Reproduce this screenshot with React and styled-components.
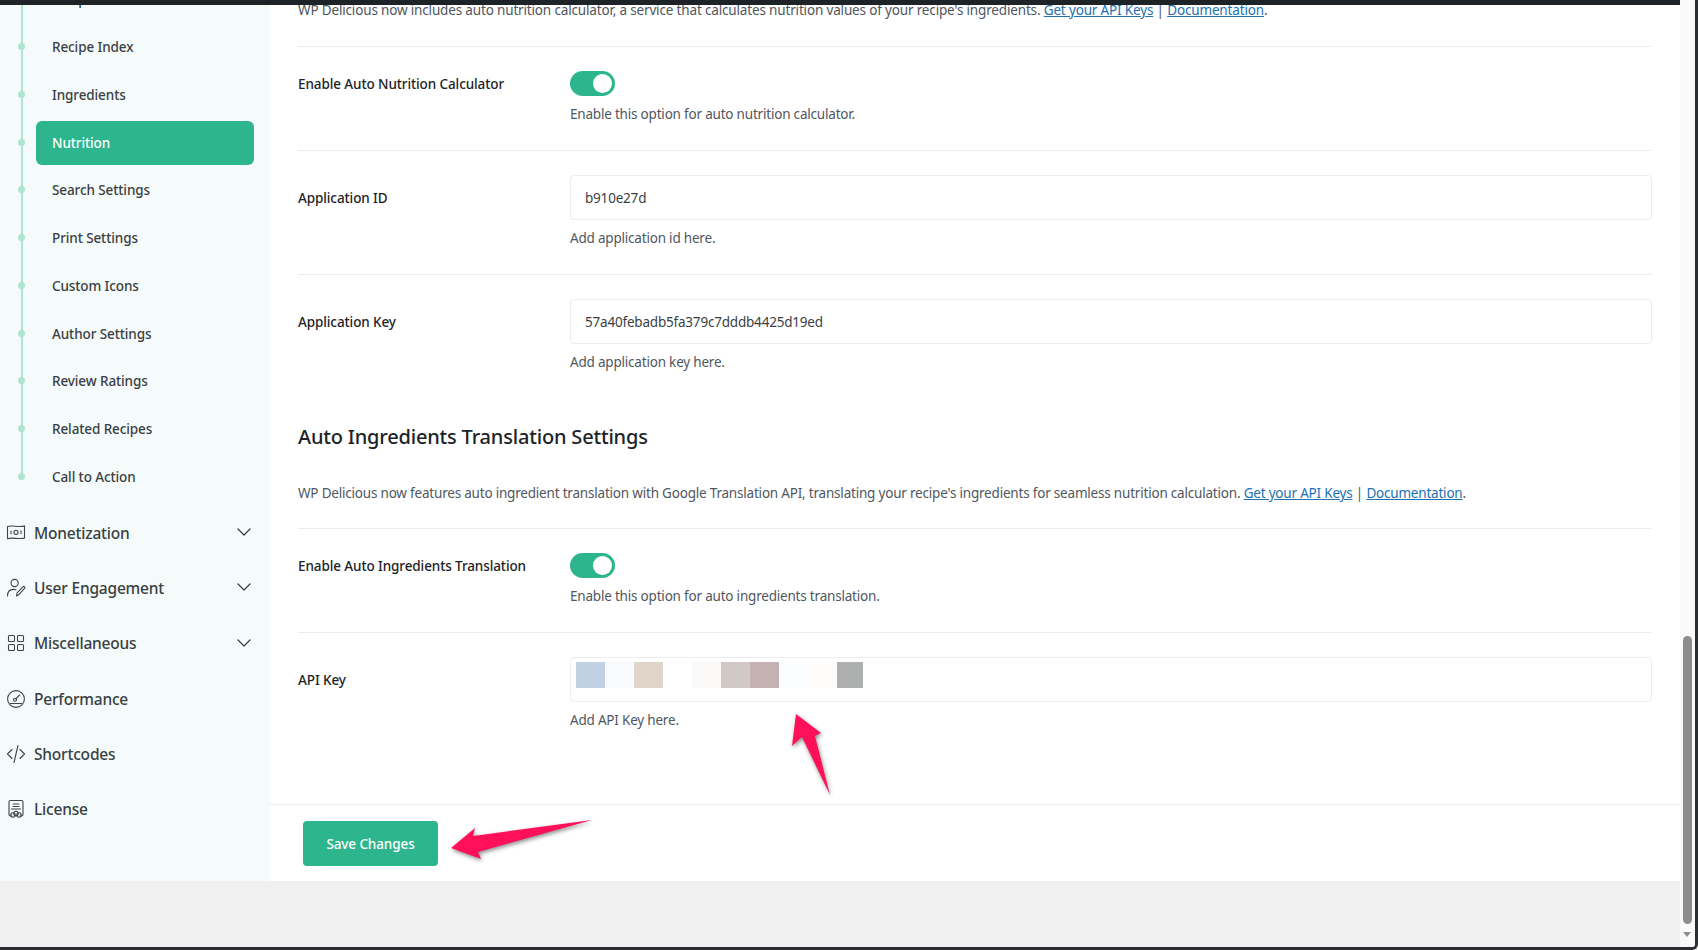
import React from 'react';
import styled, { createGlobalStyle } from 'styled-components';
import { ChevronDown } from 'lucide-react';

const GlobalStyle = createGlobalStyle`
  html, body {
    margin: 0;
    padding: 0;
    height: 100%;
    overflow: hidden;
    background: #f0f0f0;
  }
  body {
    font-family: 'Noto Sans', 'Open Sans', sans-serif;
    font-size: 13.5px;
    letter-spacing: -0.2px;
    line-height: 20px;
    color: #50575e;
  }
  * {
    box-sizing: border-box;
  }
`;

const Frame = styled.div`
  position: relative;
  display: flex;
  width: 1698px;
  height: 950px;
  overflow: hidden;
  background: #f0f0f0;
  border-right: 3px solid #2b2d30;
  border-bottom: 3px solid #2b2d30;
  border-bottom-right-radius: 6px;
`;

const AdminBar = styled.div`
  position: absolute;
  top: 0;
  left: 0;
  width: 1680px;
  height: 5px;
  background: #1d2327;
  z-index: 5;
`;

const Viewport = styled.div`
  flex: 1;
  min-width: 0;
  overflow: hidden;
`;

const Layout = styled.div`
  position: relative;
  display: flex;
  margin-top: -24px;
`;

const Sidebar = styled.aside`
  flex: 0 0 270px;
  padding-top: 1.6px;
  background: #f5fbfa;
`;

const SubList = styled.ul`
  position: relative;
  display: flex;
  flex-direction: column;
  gap: 3.72px;
  margin: 0 0 6.2px;
  padding: 0;
  list-style: none;

  &::before {
    content: '';
    position: absolute;
    left: 21px;
    top: 0;
    bottom: 22px;
    width: 1.5px;
    background: #afe3d2;
  }
`;

const SubItem = styled.li`
  position: relative;
  display: flex;
  align-items: center;
  height: 44px;
  width: 218px;
  margin-left: 36px;
  padding-left: 16px;
  border-radius: 6px;
  font-weight: 500;
  letter-spacing: -0.1px;
  color: ${(p) => (p.$active ? '#ffffff' : '#3a3f44')};
  background: ${(p) => (p.$active ? '#2db58d' : 'transparent')};

  &::before {
    content: '';
    position: absolute;
    left: -18px;
    top: 18px;
    width: 7px;
    height: 7px;
    border-radius: 50%;
    background: #afe3d2;
  }
`;

const NavRow = styled.div`
  display: flex;
  align-items: center;
  height: 55.3px;
  padding: 0 14px 0 6px;
  font-size: 15.5px;
  letter-spacing: -0.2px;
  font-weight: 500;
  color: #3a3f44;
`;

const NavIcon = styled.svg`
  flex: 0 0 20px;
  width: 20px;
  height: 20px;
  margin-right: 8px;
  fill: none;
  stroke: #3f4449;
  stroke-width: 1.1;
  stroke-linecap: round;
  stroke-linejoin: round;
`;

const NavLabel = styled.span`
  flex: 1;
`;

const Chevron = styled(ChevronDown)`
  width: 24px;
  height: 24px;
  margin-top: -1px;
  color: #3a3f44;
`;

const Main = styled.main`
  flex: 1;
  min-width: 0;
  background: #ffffff;
`;

const Content = styled.div`
  padding: 24px 28px 48px;
`;

const Intro = styled.p`
  margin: 0 0 26px;
  letter-spacing: -0.16px;
`;

const Link = styled.a`
  color: #2271b1;
  text-decoration: underline;
`;

const Row = styled.div`
  display: grid;
  grid-template-columns: 272px 1fr;
  padding: 24px 0 26px;
  border-top: 1px solid #ececec;
`;

const Label = styled.div`
  display: flex;
  align-items: center;
  height: ${(p) => p.$height}px;
  font-weight: 500;
  letter-spacing: -0.1px;
  color: #1d2327;
`;

const Toggle = styled.div`
  position: relative;
  width: 45px;
  height: 25px;
  border-radius: 13px;
  background: #2db58d;

  &::after {
    content: '';
    position: absolute;
    top: 3px;
    right: 3px;
    width: 19px;
    height: 19px;
    border-radius: 50%;
    background: #ffffff;
  }
`;

const InputWrap = styled.div`
  position: relative;
`;

const Input = styled.input`
  display: block;
  width: 100%;
  height: 45px;
  padding: 0 14px;
  border: 1px solid #ececec;
  border-radius: 4px;
  background: #ffffff;
  font: inherit;
  letter-spacing: inherit;
  color: #3a3f44;
  outline: none;
`;

const Blur = styled.div`
  position: absolute;
  top: 5px;
  left: 6px;
  display: flex;
  height: 26px;
`;

const Swatch = styled.span`
  width: ${(p) => p.$w || 29}px;
  background: ${(p) => p.$c};
`;

const Hint = styled.p`
  margin: 8px 0 0;
`;

const Heading = styled.h2`
  margin: 0;
  padding: 26px 0 0;
  height: 66px;
  font-size: 20px;
  line-height: 26px;
  letter-spacing: -0.18px;
  font-weight: 500;
  color: #1d2327;
`;

const SectionIntro = styled.p`
  margin: 19px 0 25px;
`;

const Footer = styled.div`
  padding: 16px 33px 15px;
  border-top: 1px solid #ececec;
`;

const SaveButton = styled.button`
  display: block;
  width: 135px;
  height: 45px;
  border: 0;
  border-radius: 4px;
  background: #2db58d;
  color: #ffffff;
  font: inherit;
  letter-spacing: -0.1px;
  font-weight: 500;
`;

const Arrow = styled.svg`
  position: absolute;
  left: 0;
  top: 0;
  width: 1680px;
  height: 950px;
  pointer-events: none;
  z-index: 4;
  filter: drop-shadow(1px 2px 2px rgba(0, 0, 0, 0.45));
`;

const Scrollbar = styled.div`
  position: relative;
  flex: 0 0 15px;
  background: #fafafa;
`;

const Thumb = styled.div`
  position: absolute;
  left: 3px;
  top: 636px;
  width: 9px;
  height: 288px;
  border-radius: 5px;
  background: #8d8d8d;
`;

const ScrollArrow = styled.div`
  position: absolute;
  left: 3px;
  top: 932px;
  border-left: 4.5px solid transparent;
  border-right: 4.5px solid transparent;
  border-top: 5px solid #8d8d8d;
`;

const subItems = [
  'Recipe Details',
  'Recipe Index',
  'Ingredients',
  'Nutrition',
  'Search Settings',
  'Print Settings',
  'Custom Icons',
  'Author Settings',
  'Review Ratings',
  'Related Recipes',
  'Call to Action',
];

const icons = {
  money: (
    <>
      <path d="M1.5 3.5c5-1.6 11 1.2 17-.6v12.2c-6 1.6-12-1.2-17 .6z" />
      <circle cx="10" cy="9.3" r="2.1" />
      <path d="M5 8v2.8M15 7.8v2.8" />
    </>
  ),
  user: (
    <>
      <circle cx="8.6" cy="5" r="3.6" />
      <path d="M1.5 18c0-4.4 2.6-6.6 6-6.6 1 0 1.8.1 2.5.4" />
      <path d="M10.5 18l.6-3.2 6-6.2c.8-.7 2.4.7 1.6 1.6l-6 6.6z" />
    </>
  ),
  grid: (
    <>
      <rect x="2.5" y="2.5" width="6" height="6" rx="1" />
      <rect x="11.5" y="2.5" width="6" height="6" rx="1" />
      <rect x="2.5" y="11.5" width="6" height="6" rx="1" />
      <rect x="11.5" y="11.5" width="6" height="6" rx="1" />
    </>
  ),
  gauge: (
    <>
      <circle cx="10" cy="10" r="8.4" />
      <circle cx="9" cy="10.8" r="1.5" />
      <path d="M10 9.8l3.6-3.8M4.5 14.5h11" />
    </>
  ),
  code: <path d="M6 5.5L1.5 10 6 14.5M14 5.5l4.5 4.5-4.5 4.5M12 1.5L8 18.5" />,
  license: (
    <>
      <path d="M6 17H4.5A1.5 1.5 0 0 1 3 15.5V3A1.5 1.5 0 0 1 4.5 1.5h11A1.5 1.5 0 0 1 17 3v12.5a1.5 1.5 0 0 1-1.5 1.5H14" />
      <path d="M7 5h6M7 7.5h6M5.5 10h9" />
      <circle cx="7" cy="16" r="2.2" />
      <circle cx="13" cy="16" r="2.2" />
      <circle cx="10" cy="14.5" r="2.2" />
    </>
  ),
};

const navItems = [
  { label: 'Monetization', icon: 'money', more: true },
  { label: 'User Engagement', icon: 'user', more: true },
  { label: 'Miscellaneous', icon: 'grid', more: true },
  { label: 'Performance', icon: 'gauge' },
  { label: 'Shortcodes', icon: 'code' },
  { label: 'License', icon: 'license' },
];

const swatches = [
  ['#c0d1e3'],
  ['#fafbfd'],
  ['#dfd5c9'],
  ['#ffffff'],
  ['#fbf9f7'],
  ['#d2c9c7'],
  ['#c5b1b2'],
  ['#fbfcfe'],
  ['#fdfcfa'],
  ['#aeb0af', 26],
];

const ToggleRow = ({ label, hint }) => (
  <Row>
    <Label $height={25}>{label}</Label>
    <div>
      <Toggle />
      <Hint>{hint}</Hint>
    </div>
  </Row>
);

const InputRow = ({ label, value, hint, children }) => (
  <Row>
    <Label $height={45}>{label}</Label>
    <div>
      <InputWrap>
        <Input value={value} readOnly />
        {children}
      </InputWrap>
      <Hint>{hint}</Hint>
    </div>
  </Row>
);

export default function App() {
  return (
    <Frame>
      <GlobalStyle />
      <AdminBar />
      <Viewport>
        <Layout>
          <Sidebar>
            <SubList>
              {subItems.map((item) => (
                <SubItem key={item} $active={item === 'Nutrition'}>
                  {item}
                </SubItem>
              ))}
            </SubList>
            {navItems.map((item) => (
              <NavRow key={item.label}>
                <NavIcon viewBox="0 0 20 20">{icons[item.icon]}</NavIcon>
                <NavLabel>{item.label}</NavLabel>
                {item.more && <Chevron strokeWidth={1.3} />}
              </NavRow>
            ))}
          </Sidebar>
          <Main>
            <Content>
              <Intro>
                WP Delicious now includes auto nutrition calculator, a service that calculates nutrition values of your
                recipe's ingredients. <Link>Get your API Keys</Link> | <Link>Documentation</Link>.
              </Intro>
              <ToggleRow label="Enable Auto Nutrition Calculator" hint="Enable this option for auto nutrition calculator." />
              <InputRow label="Application ID" value="b910e27d" hint="Add application id here." />
              <InputRow label="Application Key" value="57a40febadb5fa379c7dddb4425d19ed" hint="Add application key here." />
              <Heading>Auto Ingredients Translation Settings</Heading>
              <SectionIntro>
                WP Delicious now features auto ingredient translation with Google Translation API, translating your
                recipe's ingredients for seamless nutrition calculation. <Link>Get your API Keys</Link> |{' '}
                <Link>Documentation</Link>.
              </SectionIntro>
              <ToggleRow label="Enable Auto Ingredients Translation" hint="Enable this option for auto ingredients translation." />
              <InputRow label="API Key" value="" hint="Add API Key here.">
                <Blur>
                  {swatches.map(([c, w], i) => (
                    <Swatch key={i} $c={c} $w={w} />
                  ))}
                </Blur>
              </InputRow>
            </Content>
            <Footer>
              <SaveButton>Save Changes</SaveButton>
            </Footer>
          </Main>
        </Layout>
      </Viewport>
      <Arrow viewBox="0 0 1680 950">
        <polygon fill="#fe1158" points="796,714 821,733 815,736 830,795 802,737 792,746" />
        <polygon fill="#fe1158" points="451,848 475,828 473,836 592,820 478,852 481,859" />
      </Arrow>
      <Scrollbar>
        <Thumb />
        <ScrollArrow />
      </Scrollbar>
    </Frame>
  );
}
